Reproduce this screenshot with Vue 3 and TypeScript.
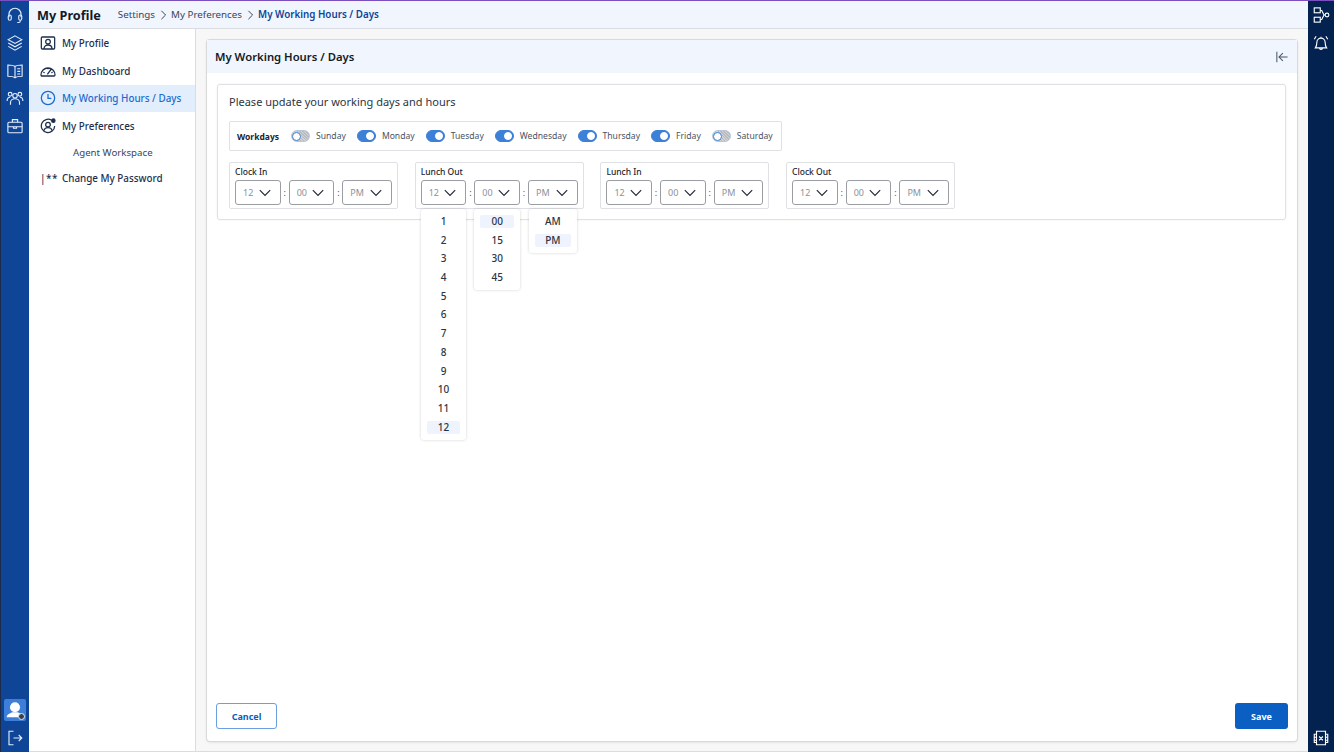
<template>
  <div class="app">
    <nav class="rail">
      <div class="rail-group">
        <svg v-for="d in railTop" :key="d" class="rail-icon" viewBox="0 0 24 24" v-html="d" />
      </div>
      <div class="rail-group bottom">
        <div class="avatar">
          <svg viewBox="0 0 24 24"><circle cx="12" cy="9" r="5.500" fill="#fff" /><path d="M3 20c0-3 3-4 6-5.500h6c3 1.500 6 2.500 6 5.500z" fill="#fff" /></svg>
          <span class="avatar-dot" />
        </div>
        <svg class="rail-icon" viewBox="0 0 24 24"><path d="M10 3H4v18h6M10 12h11M17 8l4 4-4 4" /></svg>
      </div>
    </nav>

    <div class="body">
      <header class="topbar">
        <strong class="title">My Profile</strong>
        <span class="crumb">Settings</span>
        <svg class="crumb-sep" viewBox="0 0 8 12"><path d="M1.500 1l5 5-5 5" /></svg>
        <span class="crumb">My Preferences</span>
        <svg class="crumb-sep" viewBox="0 0 8 12"><path d="M1.500 1l5 5-5 5" /></svg>
        <span class="crumb current">My Working Hours / Days</span>
      </header>

      <div class="below">
        <aside class="sidebar">
          <a v-for="item in menu" :key="item.label" class="menu-item" :class="{ active: item.active, sub: item.sub }">
            <svg v-if="item.icon" class="menu-icon" viewBox="0 0 24 24" v-html="item.icon" />
            <span v-else-if="item.stars" class="stars">|**</span>
            {{ item.label }}
          </a>
        </aside>

        <main class="content">
          <section class="panel">
            <div class="panel-head">
              <h1>My Working Hours / Days</h1>
              <svg class="collapse" viewBox="0 0 14 14"><path d="M1 1v12M13.500 7H3.500M8 2.500L3.500 7 8 11.500" /></svg>
            </div>

            <div class="panel-body">
              <div class="card">
                <p class="lead">Please update your working days and hours</p>
                <div class="workdays">
                  <b>Workdays</b>
                  <label v-for="day in days" :key="day.name" class="day">
                    <span class="toggle" :class="{ on: day.on }"><i /></span>
                    {{ day.name }}
                  </label>
                </div>

                <div class="times">
                  <div v-for="(group, g) in groups" :key="group" class="time-group">
                    <span class="time-label">{{ group }}</span>
                    <div class="time-row">
                      <template v-for="(f, i) in fields" :key="f.value">
                        <span v-if="i > 0" class="colon">:</span>
                        <div class="select" :class="f.cls">
                          {{ f.value }}
                          <svg viewBox="0 0 16 10"><path d="M1.500 1.500L8 8l6.500-6.500" /></svg>
                          <ul v-if="g === 1" class="dropdown">
                            <li v-for="o in f.options" :key="o" :class="{ picked: o === f.value }">{{ o }}</li>
                          </ul>
                        </div>
                      </template>
                    </div>
                  </div>
                </div>
              </div>
            </div>

            <div class="panel-foot">
              <button class="btn ghost">Cancel</button>
              <button class="btn primary">Save</button>
            </div>
          </section>
        </main>
      </div>
    </div>

    <nav class="rail-right">
      <div class="rail-group">
        <svg class="rail-icon" viewBox="0 0 24 24"><rect x="3" y="2.500" width="8" height="6.500" /><rect x="3" y="15" width="8" height="6.500" /><circle cx="20" cy="12" r="2.500" /><path d="M11 6h2l3 6-3 6h-2M16 12h1.500" /></svg>
        <svg class="rail-icon" viewBox="0 0 24 24"><path d="M4.500 18.500c1.500-2 2-4.500 2-7.500a5.500 5.500 0 0 1 11 0c0 3 .5 5.500 2 7.500zM10 18.500a2 2 0 0 0 4 0M12 5.500V3.500M3 7l2.500-4M21 7l-2.500-4" /></svg>
      </div>
      <svg class="rail-icon" viewBox="0 0 24 24"><path d="M6 3h12v4h3v11h-3v3H6v-3H3V7h3zM6 7v11M18 7v11M3 11h3M18 11h3M3 15h3M18 15h3M9.500 10l5 5M14.500 10l-5 5" /></svg>
    </nav>
  </div>
</template>

<script setup lang="ts">
const railTop = [
  '<path d="M4 15v-4a8 8 0 0 1 16 0v4"/><rect x="3" y="12" width="4" height="7" rx="2"/><rect x="17" y="12" width="4" height="7" rx="2"/><path d="M19 19v1a2 2 0 0 1-2 2h-2"/>',
  '<path d="M12 2.500l9 5-9 5-9-5zM3 12l9 5 9-5M3 16.500l9 5 9-5"/>',
  '<path d="M12 6c-2-1.500-5-2-9.500-2v15c4.500 0 7.500.5 9.500 2 2-1.500 5-2 9.500-2V4C17 4 14 4.500 12 6zM12 6v15M15 9h4M15 12.500h4M15 16h4"/>',
  '<circle cx="12" cy="9" r="3"/><circle cx="5.500" cy="7" r="2.500"/><circle cx="18.500" cy="7" r="2.500"/><path d="M6 21v-3c0-3 3-5 6-5s6 2 6 5v3M1.500 16c0-3 1.500-5 4-5M22.500 16c0-3-1.500-5-4-5"/>',
  '<rect x="2.500" y="7" width="19" height="14" rx="1.500"/><path d="M8.500 7V3.500h7V7M2.500 13h19M10 13v2h4v-2"/>',
]

const menu = [
  { label: 'My Profile', icon: '<rect x="2" y="3" width="20" height="18" rx="1.500"/><circle cx="12" cy="10" r="3.500"/><path d="M6 21c0-4 3-6 6-6s6 2 6 6"/>' },
  { label: 'My Dashboard', icon: '<path d="M1.500 18a10.500 10.500 0 1 1 21 0c0 .8-.5 1.500-1.500 1.500H3c-1 0-1.500-.7-1.500-1.500zM11 17l6-8M5 14l2 .5M12 7.500v2M19 14l-2 .5"/>' },
  { label: 'My Working Hours / Days', active: true, icon: '<circle cx="12" cy="12" r="10"/><path d="M12 6v6.500h5"/>' },
  { label: 'My Preferences', icon: '<path d="M17.500 3.500a10 10 0 1 0 4.500 8.500"/><circle cx="12" cy="10" r="3.500"/><path d="M6 19c.5-3 3-4.500 6-4.500s5.500 1.500 6 4.500"/><circle cx="20" cy="4" r="2.500" fill="currentColor"/>' },
  { label: 'Agent Workspace', sub: true },
  { label: 'Change My Password', stars: true },
]

const days = [
  { name: 'Sunday', on: false },
  { name: 'Monday', on: true },
  { name: 'Tuesday', on: true },
  { name: 'Wednesday', on: true },
  { name: 'Thursday', on: true },
  { name: 'Friday', on: true },
  { name: 'Saturday', on: false },
]

const groups = ['Clock In', 'Lunch Out', 'Lunch In', 'Clock Out']

const fields = [
  { value: '12', cls: '', options: ['1', '2', '3', '4', '5', '6', '7', '8', '9', '10', '11', '12'] },
  { value: '00', cls: '', options: ['00', '15', '30', '45'] },
  { value: 'PM', cls: 'wide', options: ['AM', 'PM'] },
]
</script>

<style>
html,
body {
  margin: 0;
  background: #fff;
}
</style>

<style scoped>
.app {
  display: flex;
  height: 752px;
  overflow: hidden;
  font-family: "Noto Sans", "Open Sans", sans-serif;
  color: #1d2b3f;
  border-top: 1px solid #7a4fc0;
  box-sizing: border-box;
}

.rail {
  width: 29px;
  flex: none;
  background: #0f4596;
  border-left: 1px solid #1d2b4a;
  box-sizing: border-box;
  display: flex;
  flex-direction: column;
  justify-content: space-between;
  align-items: center;
  padding: 5px 0 5px;
}

.rail-right {
  width: 26px;
  flex: none;
  background: #03224f;
  display: flex;
  flex-direction: column;
  justify-content: space-between;
  align-items: center;
  padding: 5px 0 5px;
}

.rail-group {
  display: flex;
  flex-direction: column;
  align-items: center;
  gap: 9.800px;
}

.rail-group.bottom {
  gap: 8px;
}

.rail-icon {
  width: 18px;
  height: 18px;
  fill: none;
  stroke: #e6eefa;
  stroke-width: 1.500;
}

.rail-right .rail-icon {
  stroke: #fff;
}

.avatar {
  position: relative;
  width: 22px;
  height: 22px;
  background: #3d7fd8;
  border-radius: 2px;
}

.avatar svg {
  display: block;
  width: 22px;
  height: 22px;
}

.avatar-dot {
  position: absolute;
  right: 1px;
  bottom: 1px;
  width: 5px;
  height: 5px;
  border-radius: 50%;
  background: #3b3f46;
  border: 1px solid #dfe9f8;
}

.body {
  flex: 1;
  min-width: 0;
  display: flex;
  flex-direction: column;
}

.topbar {
  height: 27px;
  flex: none;
  background: #f1f5fe;
  border-bottom: 1px solid #d9dce0;
  display: flex;
  align-items: center;
  padding-left: 8px;
  font-size: 9.800px;
}

.title {
  font-size: 12.700px;
  font-weight: 700;
  color: #111a26;
  margin-right: 17px;
}

.crumb {
  color: #3b4656;
}

.crumb.current {
  color: #0f4596;
  font-weight: 600;
}

.crumb-sep {
  width: 7px;
  height: 10px;
  margin: 0 4.500px;
  fill: none;
  stroke: #3b4656;
  stroke-width: 1.200;
}

.below {
  flex: 1;
  min-height: 0;
  display: flex;
  border-bottom: 1px solid #d9dce0;
}

.sidebar {
  width: 167px;
  flex: none;
  box-sizing: border-box;
  background: #fff;
  border-right: 1px solid #d9dce0;
}

.menu-item {
  display: flex;
  align-items: center;
  height: 27.800px;
  padding-left: 11px;
  font-size: 9.850px;
  font-weight: 500;
  color: #1d2f4d;
}

.menu-item.active {
  background: #e3eefc;
  color: #1a6ad0;
}

.menu-item.sub {
  height: 24px;
  padding-left: 44px;
  font-size: 9.700px;
  font-weight: 400;
  color: #3b4656;
}

.menu-icon {
  width: 16px;
  height: 16px;
  margin-right: 6px;
  fill: none;
  stroke: currentColor;
  stroke-width: 1.900;
}

.stars {
  width: 22px;
  font-size: 10px;
  letter-spacing: 0.500px;
}

.content {
  flex: 1;
  min-width: 0;
  background: #f7f7f7;
  padding: 11px 11px 10px;
}

.panel {
  height: 100%;
  box-sizing: border-box;
  background: #fff;
  border-radius: 3px;
  box-shadow: 0 0 0 1px #d9d9d9, 0 1px 3px rgba(0, 0, 0, 0.15);
  display: flex;
  flex-direction: column;
}

.panel-head {
  height: 33px;
  flex: none;
  background: #f1f5fe;
  display: flex;
  align-items: center;
  justify-content: space-between;
  padding: 0 9px 0 8px;
}

.panel-head h1 {
  margin: 0;
  font-size: 11.300px;
  font-weight: 600;
  color: #111a26;
}

.collapse {
  width: 12px;
  height: 12px;
  fill: none;
  stroke: #4a5565;
  stroke-width: 1.200;
}

.panel-body {
  flex: 1;
  padding: 11px 11px 0 10px;
}

.card {
  height: 136px;
  box-sizing: border-box;
  border: 1px solid #dfe1e4;
  border-radius: 3px;
  padding: 9px 11px;
  box-shadow: 0 0 2px rgba(0, 0, 0, 0.08);
}

.lead {
  margin: 0 0 11px;
  font-size: 11px;
  line-height: 16px;
  color: #2c3542;
}

.workdays {
  width: 553px;
  height: 30px;
  box-sizing: border-box;
  border: 1px solid #dfe1e4;
  border-radius: 2px;
  display: flex;
  align-items: center;
  padding-left: 7px;
  font-size: 8.600px;
  color: #4a5362;
}

.workdays b {
  font-size: 8.500px;
  font-weight: 700;
  color: #1b2431;
  margin-right: 12px;
}

.day {
  display: flex;
  align-items: center;
  gap: 6px;
  margin-right: 11px;
}

.toggle {
  width: 19px;
  height: 12px;
  border-radius: 6px;
  background: repeating-linear-gradient(45deg, #b9bbbf 0 1px, #d0d2d5 1px 2px);
  border: 1px solid #b7c6dc;
  box-sizing: border-box;
  display: flex;
  align-items: center;
  padding: 0 1px 0 0;
}

.toggle i {
  width: 9px;
  height: 9px;
  border-radius: 50%;
  background: #fff;
  border: 1px solid #3d80d8;
  box-sizing: border-box;
}

.toggle.on {
  background: #3d80d8;
  border-color: #3d80d8;
  justify-content: flex-end;
  padding: 0 1px;
}

.toggle.on i {
  width: 8px;
  height: 8px;
  border-color: #fff;
}

.times {
  display: flex;
  gap: 16.700px;
  margin-top: 11px;
}

.time-group {
  width: 169px;
  height: 47px;
  box-sizing: border-box;
  border: 1px solid #dfe1e4;
  border-radius: 2px;
  padding: 2px 5px 0;
}

.time-label {
  display: block;
  font-size: 8.500px;
  line-height: 13px;
  font-weight: 500;
  color: #1b2431;
  margin-bottom: 2px;
}

.time-row {
  display: flex;
  align-items: center;
}

.colon {
  width: 8px;
  text-align: center;
  font-size: 9px;
  color: #4a5362;
}

.select {
  position: relative;
  width: 46px;
  height: 25px;
  box-sizing: border-box;
  border: 1px solid #9a9da2;
  border-radius: 3px;
  display: flex;
  align-items: center;
  padding-left: 7px;
  font-size: 9px;
  color: #8d9197;
}

.select.wide {
  width: 50px;
}

.select > svg {
  position: absolute;
  right: 8px;
  top: 8px;
  width: 14px;
  height: 8px;
  fill: none;
  stroke: #1f2732;
  stroke-width: 1.400;
}

.dropdown {
  position: absolute;
  z-index: 2;
  top: 28px;
  left: -1px;
  right: -1px;
  margin: 0;
  padding: 6px 6px;
  list-style: none;
  background: #fff;
  border-radius: 3px;
  box-shadow: 0 0 3px rgba(0, 0, 0, 0.18);
}

.select.wide .dropdown {
  left: 0;
  right: 0;
}

.dropdown li {
  height: 13px;
  margin-bottom: 5.700px;
  line-height: 13px;
  text-align: center;
  font-size: 10px;
  font-weight: 500;
  color: #2c3542;
  border-radius: 2px;
}

.dropdown li:last-child {
  margin-bottom: 0;
}

.dropdown li.picked {
  background: #eef3fd;
}

.panel-foot {
  flex: none;
  display: flex;
  justify-content: space-between;
  padding: 0 9px 12px;
}

.btn {
  height: 26px;
  box-sizing: border-box;
  border-radius: 3px;
  font-family: inherit;
  font-size: 9px;
  font-weight: 700;
}

.btn.ghost {
  width: 61px;
  background: #fff;
  color: #0b5ec2;
  border: 1px solid #6a9fe0;
}

.btn.primary {
  width: 53px;
  background: #0b5ec2;
  color: #fff;
  border: none;
}
</style>
